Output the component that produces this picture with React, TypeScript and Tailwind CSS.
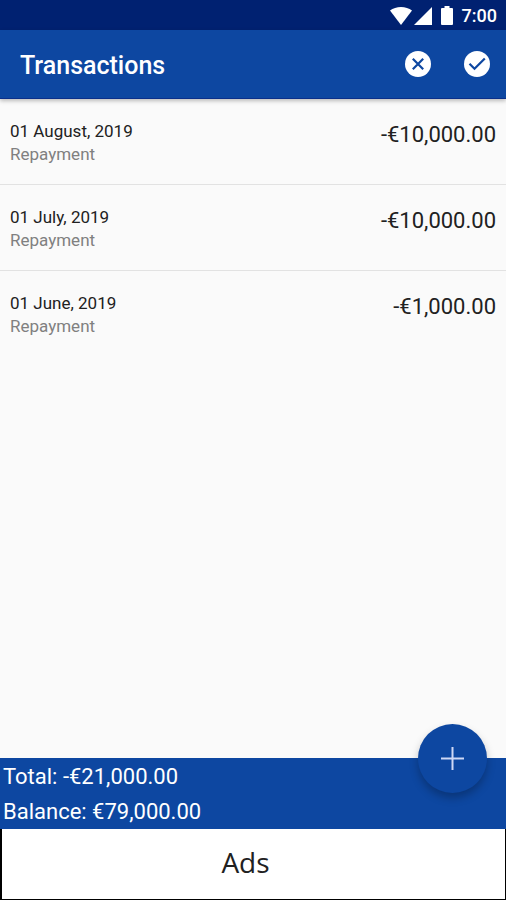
type Transaction = {
  id: number;
  date: string;
  kind: string;
  amount: string;
};

const transactions: Transaction[] = [
  { id: 1, date: "01 August, 2019", kind: "Repayment", amount: "-€10,000.00" },
  { id: 2, date: "01 July, 2019", kind: "Repayment", amount: "-€10,000.00" },
  { id: 3, date: "01 June, 2019", kind: "Repayment", amount: "-€1,000.00" },
];

function StatusBar() {
  return (
    <div className="flex h-[30px] items-center justify-end bg-[#002171] pt-px pr-[9px] text-white">
      <svg className="h-[18px] w-[22px]" viewBox="0 0 22 18" fill="currentColor" aria-hidden="true">
        <path d="M0 3.6C3 1.2 6.8 0 11 0s8 1.2 11 3.6L11 18z" />
      </svg>
      <svg className="ml-[2px] h-[18px] w-[18px]" viewBox="0 0 18 18" fill="currentColor" aria-hidden="true">
        <path d="M18 0v18H0z" />
      </svg>
      <svg className="ml-[9px] h-[19px] w-[12px]" viewBox="0 0 12 19" fill="currentColor" aria-hidden="true">
        <path d="M3.5 0h5v2H11a1 1 0 0 1 1 1v15a1 1 0 0 1-1 1H1a1 1 0 0 1-1-1V3a1 1 0 0 1 1-1h2.5z" />
      </svg>
      <span className="ml-[9px] text-lg leading-none font-medium">7:00</span>
    </div>
  );
}

function Header() {
  return (
    <header className="relative flex h-[69px] items-center justify-between border-b border-[#0a2f8a] bg-[#0d47a1] pr-4 pl-5 text-white shadow-[0_2px_4px_rgba(0,0,0,0.25)]">
      <h1 className="pt-1 text-[25px] leading-8 font-medium">Transactions</h1>
      <div className="flex gap-[33px]">
        <button type="button" aria-label="Cancel" className="h-[26px] w-[26px]">
          <svg viewBox="0 0 26 26" fill="none" aria-hidden="true">
            <circle cx="13" cy="13" r="13" fill="#fff" />
            <path d="M7.8 7.8l10.4 10.4M18.2 7.8L7.8 18.2" stroke="#0d47a1" strokeWidth="2.2" />
          </svg>
        </button>
        <button type="button" aria-label="Confirm" className="h-[26px] w-[26px]">
          <svg viewBox="0 0 26 26" fill="none" aria-hidden="true">
            <circle cx="13" cy="13" r="13" fill="#fff" />
            <path d="M5.5 12.8l5 5L20.8 7.5" stroke="#0d47a1" strokeWidth="2.2" />
          </svg>
        </button>
      </div>
    </header>
  );
}

function TransactionRow({ transaction }: { transaction: Transaction }) {
  return (
    <li className="flex h-[86px] items-start justify-between border-b border-[#e2e2e2] px-[10px] pt-5 last:border-b-0">
      <div>
        <p className="text-[17px] leading-6 text-[#212121]">{transaction.date}</p>
        <p className="text-[17px] leading-[23px] text-[#808080]">{transaction.kind}</p>
      </div>
      <p className="text-[22px] leading-8 text-[#212121]">{transaction.amount}</p>
    </li>
  );
}

function Summary() {
  return (
    <section className="relative bg-[#0d47a1] px-[3px] pt-px text-[22px] leading-[35px] text-white">
      <p>Total: -€21,000.00</p>
      <p>Balance: €79,000.00</p>
      <button
        type="button"
        aria-label="Add transaction"
        className="absolute -top-[34px] right-[19px] flex h-[69px] w-[69px] items-center justify-center rounded-full bg-[#0d47a1] shadow-[0_5px_8px_rgba(0,0,0,0.25)]"
      >
        <svg className="h-[23px] w-[23px]" viewBox="0 0 23 23" fill="none" aria-hidden="true">
          <path d="M11.5 0v23M0 11.5h23" stroke="#ced8f5" strokeWidth="2" />
        </svg>
      </button>
    </section>
  );
}

export default function App() {
  return (
    <div className="flex min-h-screen flex-col bg-[#fafafa] font-[Roboto,sans-serif]">
      <StatusBar />
      <Header />
      <main className="flex-1">
        <ul>
          {transactions.map((transaction) => (
            <TransactionRow key={transaction.id} transaction={transaction} />
          ))}
        </ul>
      </main>
      <Summary />
      <aside className="flex h-[71px] items-center justify-center border-r border-b border-l-2 border-black bg-white pr-4 pb-1 font-['Open_Sans',sans-serif] text-[28px] text-[#212121]">
        Ads
      </aside>
    </div>
  );
}
